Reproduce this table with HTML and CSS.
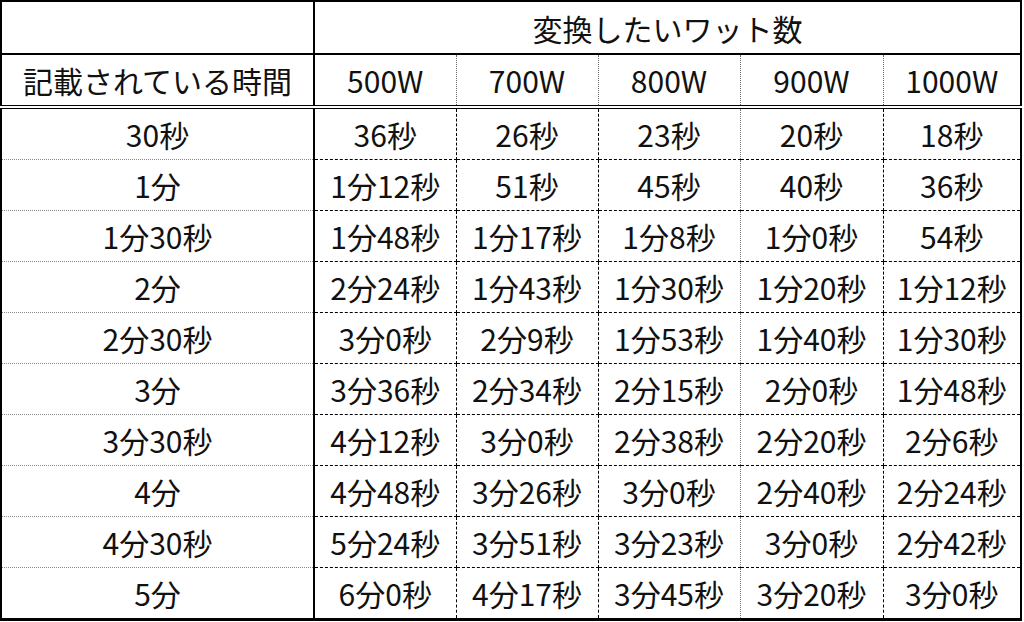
FILE: index.html
```html
<!DOCTYPE html>
<html lang="ja">
<head>
<meta charset="utf-8">
<title>ワット数変換表</title>
<link rel="stylesheet" href="styles.css">
</head>
<body>
<table class="tbl">
  <colgroup>
    <col class="c0"><col class="c1"><col class="c2"><col class="c3"><col class="c4"><col class="c5">
  </colgroup>
  <thead>
    <tr class="h1">
      <th class="first"></th>
      <th colspan="5" class="span">変換したいワット数</th>
    </tr>
    <tr class="h2">
      <th class="first">記載されている時間</th>
      <th class="v1">500W</th>
      <th class="v2">700W</th>
      <th class="v3">800W</th>
      <th class="v4">900W</th>
      <th class="v5">1000W</th>
    </tr>
  </thead>
  <tbody>
    <tr><td class="first">30秒</td><td class="v1">36秒</td><td class="v2">26秒</td><td class="v3">23秒</td><td class="v4">20秒</td><td class="v5">18秒</td></tr>
    <tr><td class="first">1分</td><td class="v1">1分12秒</td><td class="v2">51秒</td><td class="v3">45秒</td><td class="v4">40秒</td><td class="v5">36秒</td></tr>
    <tr><td class="first">1分30秒</td><td class="v1">1分48秒</td><td class="v2">1分17秒</td><td class="v3">1分8秒</td><td class="v4">1分0秒</td><td class="v5">54秒</td></tr>
    <tr><td class="first">2分</td><td class="v1">2分24秒</td><td class="v2">1分43秒</td><td class="v3">1分30秒</td><td class="v4">1分20秒</td><td class="v5">1分12秒</td></tr>
    <tr><td class="first">2分30秒</td><td class="v1">3分0秒</td><td class="v2">2分9秒</td><td class="v3">1分53秒</td><td class="v4">1分40秒</td><td class="v5">1分30秒</td></tr>
    <tr><td class="first">3分</td><td class="v1">3分36秒</td><td class="v2">2分34秒</td><td class="v3">2分15秒</td><td class="v4">2分0秒</td><td class="v5">1分48秒</td></tr>
    <tr><td class="first">3分30秒</td><td class="v1">4分12秒</td><td class="v2">3分0秒</td><td class="v3">2分38秒</td><td class="v4">2分20秒</td><td class="v5">2分6秒</td></tr>
    <tr><td class="first">4分</td><td class="v1">4分48秒</td><td class="v2">3分26秒</td><td class="v3">3分0秒</td><td class="v4">2分40秒</td><td class="v5">2分24秒</td></tr>
    <tr><td class="first">4分30秒</td><td class="v1">5分24秒</td><td class="v2">3分51秒</td><td class="v3">3分23秒</td><td class="v4">3分0秒</td><td class="v5">2分42秒</td></tr>
    <tr class="last"><td class="first">5分</td><td class="v1">6分0秒</td><td class="v2">4分17秒</td><td class="v3">3分45秒</td><td class="v4">3分20秒</td><td class="v5">3分0秒</td></tr>
  </tbody>
</table>
</body>
</html>
```

FILE: styles.css
```css
html, body {
  margin: 0;
  padding: 0;
  background: #ffffff;
}

.tbl {
  border-collapse: collapse;
  table-layout: fixed;
  width: 1020px;
  font-family: "Noto Sans CJK JP", "Noto Sans", sans-serif;
  font-size: 30px;
  font-weight: 400;
  color: #111111;
  border: 2px solid #000000;
}

.c0 { width: 313px; }
.c1 { width: 142px; }
.c2 { width: 142px; }
.c3 { width: 142px; }
.c4 { width: 143px; }
.c5 { width: 138px; }

.tbl th,
.tbl td {
  padding: 0;
  text-align: center;
  vertical-align: middle;
  font-weight: 400;
  line-height: 1;
}

.h1 th {
  height: 51px;
  border-bottom: 2px solid #000000;
}

.h2 th {
  height: 50px;
  border-bottom: 4px double #000000;
}

.h2 th.v1,
.h2 th.v2,
.h2 th.v3,
.h2 th.v4 {
  border-right: 1px dotted #666666;
}

.tbl .first {
  border-right: 2px solid #000000;
}

.tbl tbody td {
  height: 50px;
  border-bottom: 1px dashed #000000;
}

.tbl tbody td.first {
  border-bottom: 1px dotted #8a8a8a;
}

.tbl tbody td.v1,
.tbl tbody td.v2,
.tbl tbody td.v4 {
  border-right: 1px dashed #000000;
}

.tbl tbody td.v3 {
  border-right: 1px dotted #777777;
}

.tbl tbody tr.last td {
  border-bottom: 3px solid #000000;
}
```
